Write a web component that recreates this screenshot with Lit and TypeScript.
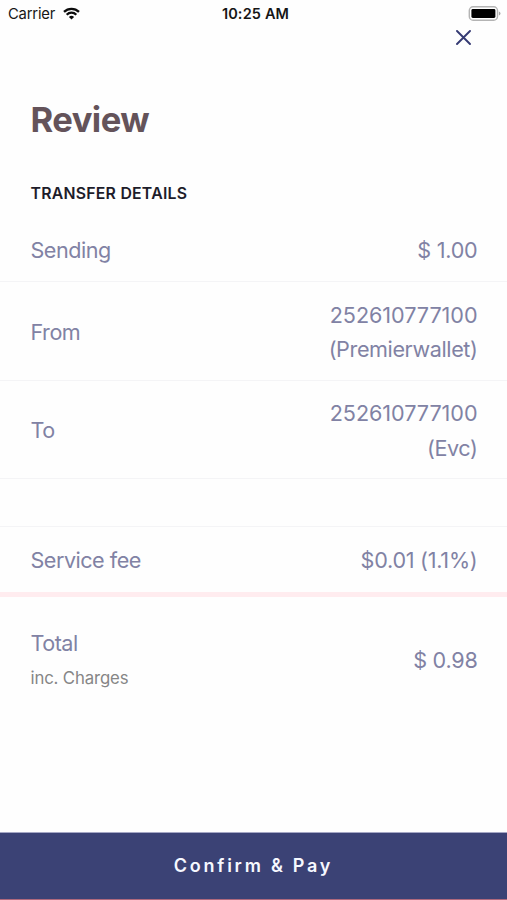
import { LitElement, html, css, nothing } from "lit";
import { customElement, property } from "lit/decorators.js";
import { classMap } from "lit/directives/class-map.js";

@customElement("status-bar")
class StatusBar extends LitElement {
  static styles = css`
    :host { display: grid; grid-template-columns: 1fr auto 1fr; align-items: center; height: 27px; padding: 0 6px 0 8px; color: #161616; font-size: 15px; }
    .carrier { display: flex; align-items: center; gap: 7.5px; letter-spacing: -0.2px; font-size: 14.8px; }
    .time { font-weight: 600; font-size: 14.5px; letter-spacing: 0.15px; padding-left: 2px; }
    .battery { justify-self: end; }
    svg { display: block; }
  `;
  render() {
    return html`
      <div class="carrier">
        <span>Carrier</span>
        <svg width="17" height="13" viewBox="0 0 17 13" fill="none" stroke="#0c0c0c" stroke-width="2.3">
          <path d="M1 4.9a10.7 10.7 0 0 1 15 0" />
          <path d="M3.7 7.7a6.8 6.8 0 0 1 9.6 0" />
          <path d="M8.5 12.6 5.9 10a3.7 3.7 0 0 1 5.2 0Z" fill="#0c0c0c" stroke="none" />
        </svg>
      </div>
      <span class="time">10:25 AM</span>
      <svg class="battery" width="33" height="15" viewBox="0 0 33 15">
        <rect x="1.3" y="0.8" width="28.2" height="13.4" rx="3.8" fill="#fff" stroke="#b4b4b4" stroke-width="1.4" />
        <rect x="3.4" y="3" width="24" height="9" rx="1.4" fill="#000" />
        <path d="M30.9 5.4q1.6.6 1.6 2.1t-1.6 2.1Z" fill="#a8a8a8" />
      </svg>
    `;
  }
}

@customElement("detail-row")
class DetailRow extends LitElement {
  @property() label = "";
  @property() note = "";
  @property({ attribute: false }) lines: string[] = [];
  static styles = css`
    :host { display: flex; align-items: center; justify-content: space-between; box-sizing: border-box; padding: 2px 29.5px 0 30.5px; border-bottom: 1px solid #f4f4f6; color: #8182a4; font-size: 21.6px; line-height: 34.3px; letter-spacing: -0.4px; }
    .label { letter-spacing: -0.5px; }
    .value { text-align: right; }
    .amount { letter-spacing: -0.25px; }
    .account { letter-spacing: -0.05px; }
    .note { font-size: 16.8px; line-height: 34px; color: #868686; letter-spacing: -0.15px; }
  `;
  render() {
    return html`
      <div>
        <div class="label">${this.label}</div>
        ${this.note ? html`<div class="note">${this.note}</div>` : nothing}
      </div>
      <div class="value">
        ${this.lines.map((line) => html`<div class=${classMap({ amount: line.startsWith("$"), account: /^\d+$/.test(line) })}>${line}</div>`)}
      </div>
    `;
  }
}

@customElement("app-root")
class AppRoot extends LitElement {
  static styles = css`
    :host { display: flex; flex-direction: column; height: 900px; background: #fefefe; font-family: Inter, "Liberation Sans", sans-serif; overflow: hidden; }
    .close { align-self: flex-end; margin: 3px 36.5px 0 0; padding: 0; border: 0; background: none; }
    .close svg { display: block; }
    h1 { margin: 54px 30.5px 0; font-size: 34.6px; line-height: 40px; font-weight: 700; color: #64535a; letter-spacing: -0.55px; }
    h2 { margin: 44.5px 30.5px 0; font-size: 15.8px; line-height: 20px; font-weight: 600; color: #1d1c2a; letter-spacing: 0.25px; }
    detail-row { flex: none; }
    .sending { height: 78.5px; padding-top: 16px; }
    .party { height: 99px; }
    .party.to { height: 98px; }
    .gap { height: 48px; }
    .fee { height: 70px; border-bottom: 5px solid #ffecef; }
    .total { height: 128px; border: 0; padding-top: 0; padding-bottom: 1px; }
    .pay { margin-top: auto; height: 68px; box-sizing: border-box; border: 0; border-top: 1px solid #a5a7c5; border-bottom: 1px solid #b0697d; padding: 0; background: #3b4275; color: #f6f8ff; font: 600 18px/1 Inter, sans-serif; letter-spacing: 2.75px; }
  `;
  render() {
    return html`
      <status-bar></status-bar>
      <button class="close" aria-label="Close">
        <svg width="15" height="15" viewBox="0 0 15 15" stroke="#353a73" stroke-width="1.9" stroke-linecap="round">
          <path d="m1 1 13 13M14 1 1 14" />
        </svg>
      </button>
      <h1>Review</h1>
      <h2>TRANSFER DETAILS</h2>
      <detail-row class="sending" label="Sending" .lines=${["$ 1.00"]}></detail-row>
      <detail-row class="party" label="From" .lines=${["252610777100", "(Premierwallet)"]}></detail-row>
      <detail-row class="party to" label="To" .lines=${["252610777100", "(Evc)"]}></detail-row>
      <detail-row class="gap"></detail-row>
      <detail-row class="fee" label="Service fee" .lines=${["$0.01 (1.1%)"]}></detail-row>
      <detail-row class="total" label="Total" note="inc. Charges" .lines=${["$ 0.98"]}></detail-row>
      <button class="pay">Confirm &amp; Pay</button>
    `;
  }
}
